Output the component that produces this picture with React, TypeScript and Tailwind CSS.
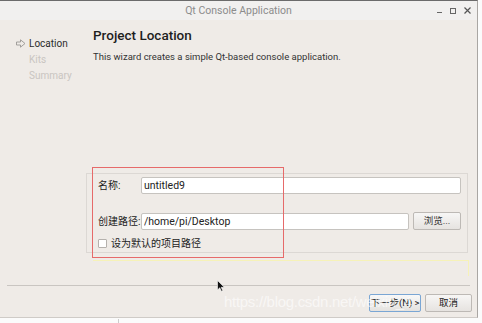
import { useState } from 'react';

const font = "font-['Roboto','Noto_Sans_CJK_SC',sans-serif]";

const WizardStep = ({ label, active }: { label: string; active?: boolean }) => (
  <div className="flex items-center h-[16px]">
    <div className="w-[13px] flex items-center">
      {active && (
        <svg width="10" height="9" viewBox="0 0 10 9">
          <path d="M0.5 3 H4.5 V0.8 L9 4.5 L4.5 8.2 V6 H0.5 Z" fill="none" stroke="#9a9794" strokeWidth="0.9" />
        </svg>
      )}
    </div>
    <span className={active ? 'text-[10px] text-[#2b2b2b]' : 'text-[10px] text-[#c9c5c1]'}>{label}</span>
  </div>
);

const App = () => {
  const [name, setName] = useState('untitled9');
  const [path, setPath] = useState('/home/pi/Desktop');
  const [useDefault, setUseDefault] = useState(false);

  return (
    <div className={`w-[482px] h-[323px] bg-[#fbfbfb] relative overflow-hidden ${font}`}>
      <div className="w-[478px] h-[318px] bg-[#efebe7] border-t border-t-[#6b6b6b] border-r border-r-[#a9a6a3] border-b border-b-[#cfcbc7] flex flex-col">
        {/* title bar */}
        <div className="h-[19px] bg-[#f1f0ef] flex items-center">
          <div className="w-[60px]" />
          <div className="flex-1 text-center text-[10.5px] text-[#8c8c8c]">Qt Console Application</div>
          <div className="w-[60px] flex items-center justify-end gap-[8px] pr-[6px] text-[#555]">
            <div className="w-[5px] h-[1px] bg-[#666] mt-[4px]" />
            <div className="w-[6px] h-[6px] border border-[#666]" />
            <svg width="7" height="7" viewBox="0 0 7 7">
              <path d="M0.5 0.5 L6.5 6.5 M6.5 0.5 L0.5 6.5" stroke="#555" strokeWidth="1.2" />
            </svg>
          </div>
        </div>

        {/* wizard body */}
        <div className="h-[265px] flex">
          <div className="w-[86px] pl-[16px] pt-[15px] flex flex-col">
            <WizardStep label="Location" active />
            <WizardStep label="Kits" />
            <WizardStep label="Summary" />
          </div>
          <div className="flex-1 flex flex-col">
            <div className="pl-[7px] pt-[7px] text-[13.5px] leading-[16px] font-medium text-[#1e1e1e]">Project Location</div>
            <div className="pl-[7px] mt-[7px] text-[9.5px] leading-[14px] text-[#333]">
              This wizard creates a simple Qt-based console application.
            </div>
            <div className="mt-[109px] w-[382px] h-[80px] border border-[#dcd8d4] pl-[11px] pr-[6px] pt-[3px] flex flex-col">
              <div className="flex items-center h-[17px]">
                <span className="w-[43px] text-[10px] text-[#222]">名称:</span>
                <input
                  value={name}
                  onChange={e => setName(e.target.value)}
                  className="flex-1 h-[17px] bg-white border border-[#c6c3bf] rounded-[2px] px-[2px] text-[10.5px] text-[#222] outline-none"
                />
              </div>
              <div className="flex items-center h-[18px] mt-[18px]">
                <span className="w-[43px] text-[10px] text-[#222]">创建路径:</span>
                <input
                  value={path}
                  onChange={e => setPath(e.target.value)}
                  className="w-[269px] h-[17px] bg-white border border-[#c6c3bf] rounded-[2px] px-[2px] text-[10.5px] text-[#222] outline-none"
                />
                <button className="ml-[4px] w-[48px] h-[18px] border border-[#bdb9b5] rounded-[2px] bg-gradient-to-b from-[#f7f6f5] to-[#e6e3e0] text-[9.5px] text-[#333]">
                  浏览...
                </button>
              </div>
              <label className="flex items-center h-[12px] mt-[7px]">
                <input
                  type="checkbox"
                  checked={useDefault}
                  onChange={e => setUseDefault(e.target.checked)}
                  className="appearance-none w-[9px] h-[9px] bg-white border border-[#b5b1ad] rounded-[1px] m-0"
                />
                <span className="ml-[4px] text-[10px] text-[#222]">设为默认的项目路径</span>
              </label>
            </div>
          </div>
        </div>

        {/* bottom buttons */}
        <div className="mx-[7px] border-t border-[#c9c5c1]" />
        <div className="flex justify-end items-center gap-[4px] pr-[5px] pt-[8px]">
          <button className="w-[52px] h-[18px] border border-[#7aa6d4] rounded-[2px] bg-gradient-to-b from-[#f8f8f8] to-[#e4e2df] text-[9.5px] text-[#222]">
            下一步(N) &gt;
          </button>
          <button className="w-[47px] h-[18px] border border-[#bdb9b5] rounded-[2px] bg-gradient-to-b from-[#f7f6f5] to-[#e6e3e0] text-[9.5px] text-[#222]">
            取消
          </button>
        </div>
      </div>

      {/* annotation overlays */}
      <div className="absolute left-[92px] top-[167px] w-[192px] h-[91px] border border-[#e66a6a] pointer-events-none" />
      <div className="absolute left-[93px] top-[260px] w-[376px] h-[1px] bg-[#f6f2b8] pointer-events-none" />
      <div className="absolute left-[468px] top-[260px] w-[1px] h-[16px] bg-[#f6f2b8] pointer-events-none" />
      <div className="absolute left-[224px] top-[293px] text-[15px] leading-[18px] text-white/60 font-['Liberation_Sans',sans-serif] pointer-events-none tracking-[-0.3px]">
        https://blog.csdn.net/weixin_4
      </div>
      <svg className="absolute left-[217px] top-[280px] pointer-events-none" width="8" height="12" viewBox="0 0 8 12">
        <path d="M0.5 0.5 V10 L2.8 7.8 L4.4 11.3 L5.8 10.7 L4.2 7.3 H7.3 Z" fill="#111" stroke="#fff" strokeWidth="0.6" />
      </svg>
      <div className="absolute left-[118px] top-[319px] w-[1px] h-[4px] bg-[#ccc]" />
    </div>
  );
};

export default App;
